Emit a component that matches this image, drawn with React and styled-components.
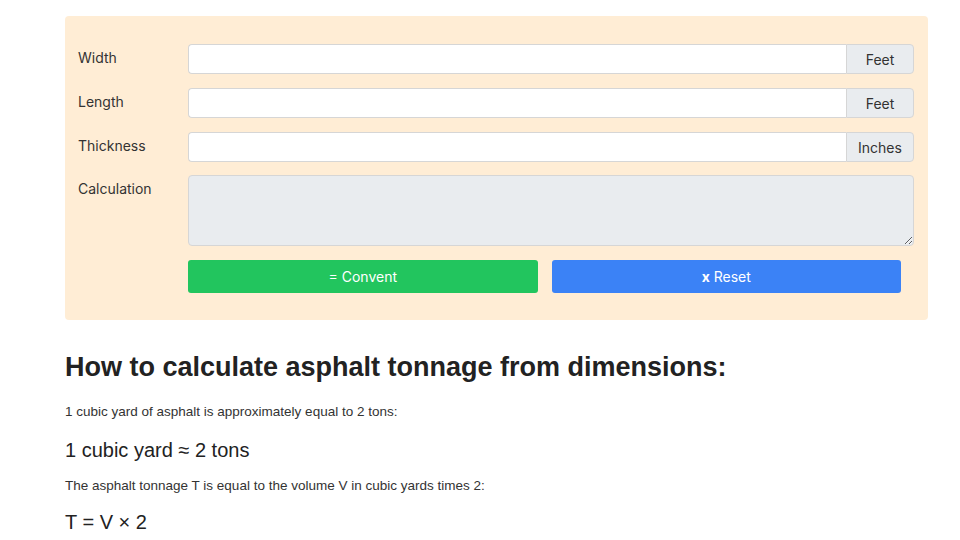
import React from 'react'
import styled, { createGlobalStyle } from 'styled-components'

const GlobalStyle = createGlobalStyle`
  body {
    margin: 0;
    background: #fff;
    font-family: "Liberation Sans", Arial, sans-serif;
    color: #222;
  }
`

const Page = styled.div`
  width: 863px;
  margin: 0 0 0 65px;
  padding-top: 16px;
`

const Panel = styled.div`
  background: #ffedd5;
  border-radius: 4px;
  padding: 28px 14px 27px 13px;
  display: flex;
  flex-direction: column;
  gap: 14px;
  font-family: Inter, "Noto Sans", sans-serif;
`

const Row = styled.div`
  display: flex;
  align-items: flex-start;
  margin-top: ${p => p.$shift || 0}px;
`

const Label = styled.label`
  width: 110px;
  flex: none;
  padding-top: 5px;
  font-size: 14px;
  line-height: 17px;
  color: #333;
`

const Group = styled.div`
  flex: 1;
  display: flex;
  height: 30px;
`

const Input = styled.input`
  flex: 1;
  min-width: 0;
  box-sizing: border-box;
  height: 30px;
  border: 1px solid #d6d6d6;
  border-right: none;
  border-radius: 4px 0 0 4px;
  background: #fff;
  outline: none;
`

const Addon = styled.span`
  width: 68px;
  box-sizing: border-box;
  display: flex;
  align-items: center;
  justify-content: center;
  background: #e9ecef;
  border: 1px solid #d6d6d6;
  border-radius: 0 4px 4px 0;
  font-size: 14px;
  color: #333;
`

const Area = styled.textarea`
  flex: 1;
  height: 71px;
  box-sizing: border-box;
  border: 1px solid #d6d6d6;
  border-radius: 4px;
  background: #e9ecef;
  resize: vertical;
  outline: none;
`

const Buttons = styled.div`
  display: flex;
  gap: 14px;
  margin-left: 110px;
  width: 713px;
`

const Button = styled.button`
  flex: 1;
  height: 33px;
  border: none;
  border-radius: 3px;
  background: ${p => p.$color};
  color: #fff;
  font-family: Inter, "Noto Sans", sans-serif;
  font-size: 14px;
`

const Heading = styled.h2`
  margin: 30px 0 0;
  font-size: 27px;
  line-height: 34px;
  font-weight: bold;
  color: #222;
`

const Text = styled.p`
  margin: ${p => p.$top}px 0 0;
  font-size: 13.5px;
  line-height: 17px;
  color: #333;
`

const Formula = styled.div`
  margin: ${p => p.$top}px 0 0;
  font-size: 20px;
  line-height: 24px;
  color: #222;
`

const fields = [
  { label: 'Width', unit: 'Feet' },
  { label: 'Length', unit: 'Feet' },
  { label: 'Thickness', unit: 'Inches' },
]

export default function App() {
  return (
    <Page>
      <GlobalStyle />
      <Panel>
        {fields.map(f => (
          <Row key={f.label}>
            <Label>{f.label}</Label>
            <Group>
              <Input type="text" />
              <Addon>{f.unit}</Addon>
            </Group>
          </Row>
        ))}
        <Row $shift={-1}>
          <Label>Calculation</Label>
          <Area readOnly />
        </Row>
        <Buttons>
          <Button $color="#22c55e">= Convent</Button>
          <Button $color="#3b82f6"><b>x</b> Reset</Button>
        </Buttons>
      </Panel>
      <Heading>How to calculate asphalt tonnage from dimensions:</Heading>
      <Text $top={19}>1 cubic yard of asphalt is approximately equal to 2 tons:</Text>
      <Formula $top={18}>1 cubic yard ≈ 2 tons</Formula>
      <Text $top={15}>The asphalt tonnage T is equal to the volume V in cubic yards times 2:</Text>
      <Formula $top={16}>T = V × 2</Formula>
    </Page>
  )
}
